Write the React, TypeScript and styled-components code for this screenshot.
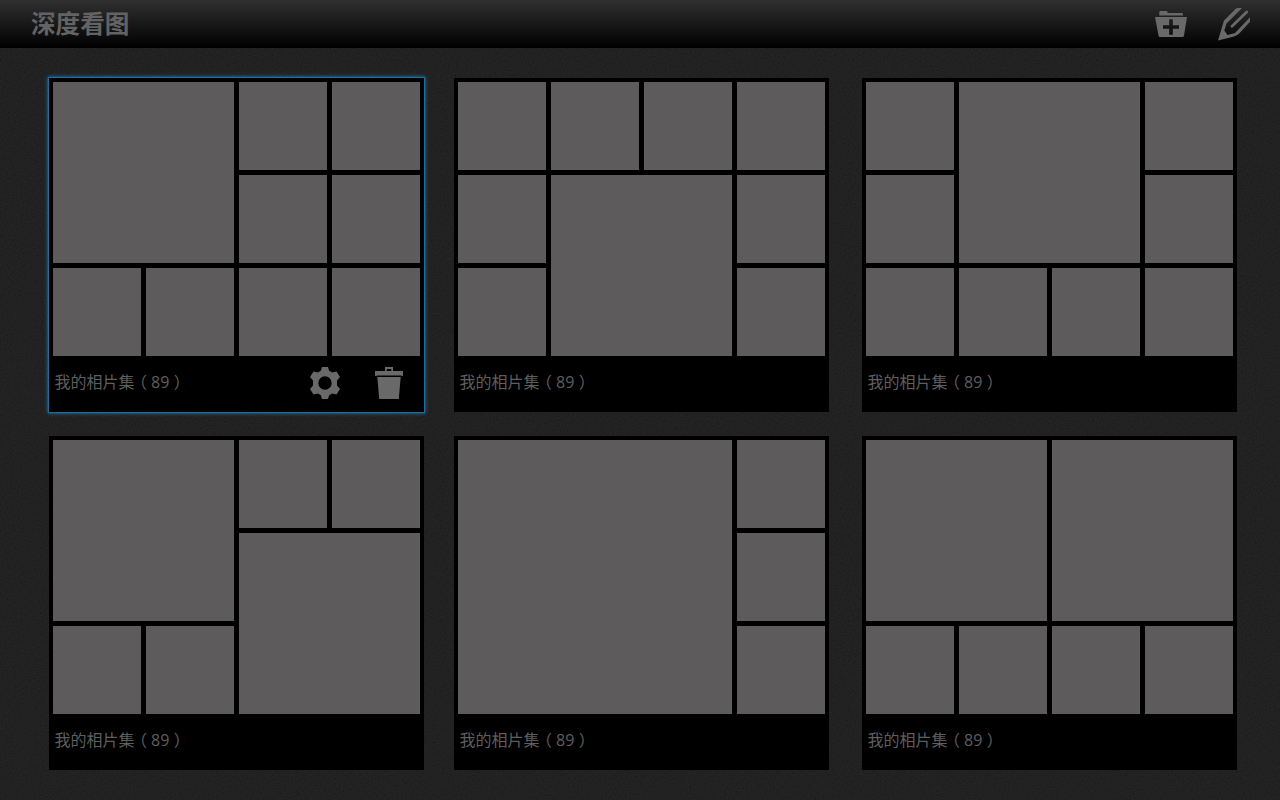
import React from "react";
import styled, { createGlobalStyle } from "styled-components";

const GlobalStyle = createGlobalStyle`
  * { box-sizing: border-box; }
  html, body { margin: 0; height: 100%; background: #1c1c1c; overflow: hidden; }
  body { font-family: "Open Sans", "Noto Sans CJK SC", sans-serif; }
`;

const Page = styled.div`
  position: relative;
  isolation: isolate;
  width: 1280px;
  height: 800px;
  background: #191919;
  overflow: hidden;
`;

const Grain = styled.svg`
  position: absolute;
  inset: 0;
  z-index: -1;
  width: 100%;
  height: 100%;
  opacity: 0.05;
`;

const TopBar = styled.header`
  display: flex;
  align-items: center;
  justify-content: space-between;
  height: 48px;
  padding: 0 30px 0 31px;
  background: linear-gradient(#303030, #000);
`;

const Title = styled.h1`
  margin: 0;
  font: 700 24.6px/45px "Noto Sans CJK SC", sans-serif;
  height: 48px;
  color: #636363;
`;

const IconButton = styled.button`
  display: flex;
  padding: 0;
  border: 0;
  background: none;
  color: #696969;
`;

const Actions = styled.div<{ $gap: number }>`
  display: flex;
  align-items: center;
  gap: ${(p) => p.$gap}px;
`;

const Gallery = styled.main`
  display: grid;
  grid-template-columns: 405px 408px 375px;
  grid-auto-rows: 334px;
  row-gap: 24px;
  padding: 30px 0 30px 49px;
`;

const Card = styled.article<{ $selected?: boolean }>`
  display: flex;
  flex-direction: column;
  width: 375px;
  height: 334px;
  padding: 4px 4px 0;
  background: #000;
  box-shadow: ${(p) => (p.$selected ? "0 0 1px 1px #1f6d9c, 0 0 4px 1px #2377a8" : "none")};
`;

const Mosaic = styled.div`
  display: grid;
  grid-template-columns: repeat(4, 1fr);
  grid-template-rows: repeat(3, 1fr);
  gap: 4.5px;
  height: 274px;
`;

const Tile = styled.div<{ $area: string }>`
  grid-area: ${(p) => p.$area};
  background: #5d5b5c;
`;

const Footer = styled.footer`
  display: flex;
  align-items: center;
  justify-content: space-between;
  height: 54px;
  padding: 0 17px 0 1.5px;
`;

const Caption = styled.span`
  height: 54px;
  font-size: 16px;
  line-height: 50px;
  color: #5e5e5e;
  white-space: nowrap;
`;

const Paren = styled.span`
  margin: 0 4px 0 4.5px;
  font-family: "Noto Sans CJK SC", sans-serif;
  font-feature-settings: "halt";
`;

const FolderAdd = () => (
  <svg width="32" height="32" viewBox="0 0 32 32" fill="currentColor">
    <path d="M4.3 7.5V4.3Q4.3 3 5.5 3H11.5Q12.7 3 12.7 5H26.5Q28 5 28 6.3V7.5Z" />
    <path fillRule="evenodd" d="M0 9H32L29 27.5Q28.8 29 27.5 29H5Q3.8 29 3.5 27.5ZM14.2 11.3V17.3H8V20.7H14.2V26.7H17.8V20.7H24V17.3H17.8V11.3Z" />
  </svg>
);

const Pencil = () => (
  <svg width="32" height="33" viewBox="0 0 32 33">
    <path fill="currentColor" d="M0 32.5L6 12.5L18 .5Q19 0 20 0H24L8.5 15.5L6.3 22.5L9.5 27L17 25L32 9.3V13.8L20.5 26.2L16 28.5Z" />
    <path fill="none" stroke="currentColor" strokeWidth="2.8" strokeLinecap="round" d="M14 18.3L28.7 4" />
  </svg>
);

const Gear = () => (
  <svg width="32" height="32" viewBox="0 0 32 32" fill="currentColor">
    <path fillRule="evenodd" d="M13 0H19L20 3.5L23 5.5L27.5 4.5L31 10L28 13.5V18.5L31 22L27.5 27.5L23 26.5L20 28.5L19 32H13L12 28.5L9 26.5L4.5 27.5L1 22L4 18.5V13.5L1 10L4.5 4.5L9 5.5L12 3.5ZM16 9.3A6.7 6.7 0 1 0 16 22.7A6.7 6.7 0 1 0 16 9.3Z" />
  </svg>
);

const Trash = () => (
  <svg width="28" height="32" viewBox="0 0 28 32" fill="currentColor">
    <path fillRule="evenodd" d="M10 0H18V4H28V8.5Q27.5 9.5 26 8.5H2Q.5 9.5 0 8.5V4H10ZM11.7 2V4H16.3V2Z" />
    <path d="M2.3 10H25.7L23.8 32H4.2Z" />
  </svg>
);

const at = (row: number, col: number, size = 1) => `${row} / ${col} / span ${size} / span ${size}`;

const albums: string[][] = [
  [at(1, 1, 2), at(1, 3), at(1, 4), at(2, 3), at(2, 4), at(3, 1), at(3, 2), at(3, 3), at(3, 4)],
  [at(1, 1), at(1, 2), at(1, 3), at(1, 4), at(2, 1), at(2, 2, 2), at(2, 4), at(3, 1), at(3, 4)],
  [at(1, 1), at(1, 2, 2), at(1, 4), at(2, 1), at(2, 4), at(3, 1), at(3, 2), at(3, 3), at(3, 4)],
  [at(1, 1, 2), at(1, 3), at(1, 4), at(2, 3, 2), at(3, 1), at(3, 2)],
  [at(1, 1, 3), at(1, 4), at(2, 4), at(3, 4)],
  [at(1, 1, 2), at(1, 3, 2), at(3, 1), at(3, 2), at(3, 3), at(3, 4)],
];

export default function App() {
  return (
    <Page>
      <GlobalStyle />
      <Grain>
        <filter id="grain">
          <feTurbulence type="fractalNoise" baseFrequency="0.6" numOctaves="3" />
          <feColorMatrix values="1.5 0 0 0 -0.2  1.5 0 0 0 -0.2  1.5 0 0 0 -0.2  0 0 0 0 1" />
        </filter>
        <rect width="100%" height="100%" filter="url(#grain)" />
      </Grain>
      <TopBar>
        <Title>深度看图</Title>
        <Actions $gap={31}>
          <IconButton aria-label="新建相册"><FolderAdd /></IconButton>
          <IconButton aria-label="编辑"><Pencil /></IconButton>
        </Actions>
      </TopBar>
      <Gallery>
        {albums.map((tiles, i) => (
          <Card key={i} $selected={i === 0}>
            <Mosaic>
              {tiles.map((area) => <Tile key={area} $area={area} />)}
            </Mosaic>
            <Footer>
              <Caption>
                我的相片集<Paren>（</Paren>89<Paren>）</Paren>
              </Caption>
              {i === 0 && (
                <Actions $gap={34}>
                  <IconButton aria-label="设置"><Gear /></IconButton>
                  <IconButton aria-label="删除"><Trash /></IconButton>
                </Actions>
              )}
            </Footer>
          </Card>
        ))}
      </Gallery>
    </Page>
  );
}
